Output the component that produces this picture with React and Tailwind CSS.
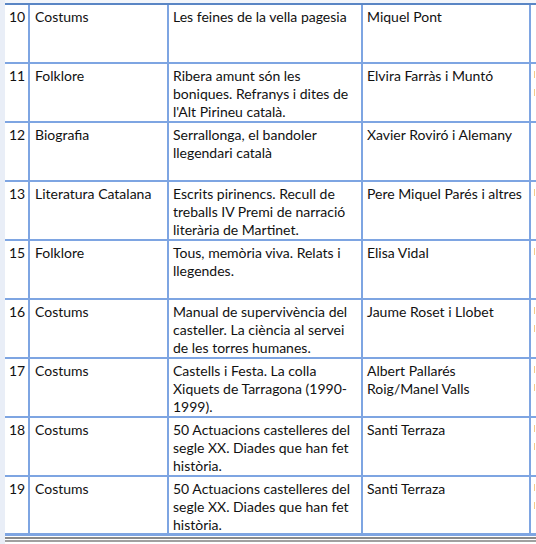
import React from 'react';

const rows = [
  { n: '10', cat: 'Costums', title: ['Les feines de la vella pagesia'], author: ['Miquel Pont'], extra: 0 },
  { n: '11', cat: 'Folklore', title: ['Ribera amunt són les', 'boniques. Refranys i dites de', "l'Alt Pirineu català."], author: ['Elvira Farràs i Muntó'], extra: 2 },
  { n: '12', cat: 'Biografia', title: ['Serrallonga, el bandoler', 'llegendari català'], author: ['Xavier Roviró i Alemany'], extra: 0 },
  { n: '13', cat: 'Literatura Catalana', title: ['Escrits pirinencs. Recull de', 'treballs IV Premi de narració', 'literària de Martinet.'], author: ['Pere Miquel Parés i altres'], extra: 1 },
  { n: '15', cat: 'Folklore', title: ['Tous, memòria viva. Relats i', 'llegendes.'], author: ['Elisa Vidal'], extra: 1 },
  { n: '16', cat: 'Costums', title: ['Manual de supervivència del', 'casteller. La ciència al servei', 'de les torres humanes.'], author: ['Jaume Roset i Llobet'], extra: 2 },
  { n: '17', cat: 'Costums', title: ['Castells i Festa. La colla', 'Xiquets de Tarragona (1990-', '1999).'], author: ['Albert Pallarés', 'Roig/Manel Valls'], extra: 2 },
  { n: '18', cat: 'Costums', title: ['50 Actuacions castelleres del', 'segle XX. Diades que han fet', 'història.'], author: ['Santi Terraza'], extra: 2 },
  { n: '19', cat: 'Costums', title: ['50 Actuacions castelleres del', 'segle XX. Diades que han fet', 'història.'], author: ['Santi Terraza'], extra: 2 },
];

function Lines({ items }) {
  return items.map((t, i) => (
    <div key={i} className="whitespace-nowrap">{t}</div>
  ));
}

// slivers of the next, clipped column
function Slivers({ count }) {
  return (
    <div className="flex flex-col gap-[11px] pt-[7px] pl-[3px]">
      {Array.from({ length: count }).map((_, i) => (
        <div key={i} className="w-[1px] h-[7px] bg-[#f3c98a]" />
      ))}
    </div>
  );
}

export default function App() {
  return (
    <div className="w-[536px] h-[544px] overflow-hidden bg-white flex text-[14px] leading-[18px] text-[#111]" style={{ fontFamily: 'Lato, "Open Sans", sans-serif' }}>
      <div className="w-[5px] bg-[#e9eef7]" />
      <div className="flex-1 flex flex-col min-w-0">
        <div className="h-[3px] bg-[#f3f6fb]" />
        <div className="border-t-2 border-[#5a86c5]">
          {rows.map((r, i) => (
            <div
              key={i}
              className={`flex h-[59px] ${i === rows.length - 1 ? 'border-b-[3px]' : 'border-b-2'} border-[#7ea5e2]`}
            >
              <div className="w-[25px] shrink-0 border-r-2 border-[#7ea5e2] pl-[4px] pt-[3px]">{r.n}</div>
              <div className="w-[139px] shrink-0 border-r-2 border-[#7ea5e2] pl-[5px] pt-[3px]">{r.cat}</div>
              <div className="w-[194px] shrink-0 border-r-2 border-[#7ea5e2] pl-[4px] pt-[3px]"><Lines items={r.title} /></div>
              <div className="w-[168px] shrink-0 border-r-2 border-[#7ea5e2] pl-[4px] pt-[3px]"><Lines items={r.author} /></div>
              <div className="flex-1 overflow-hidden"><Slivers count={r.extra} /></div>
            </div>
          ))}
        </div>
        <div className="h-[1px] bg-white" />
        <div className="h-[2px] bg-[#8a8a8a]" />
        <div className="h-[1px] bg-white" />
        <div className="h-[2px] bg-[#a0a0a0]" />
        <div className="flex-1 bg-white" />
      </div>
    </div>
  );
}
